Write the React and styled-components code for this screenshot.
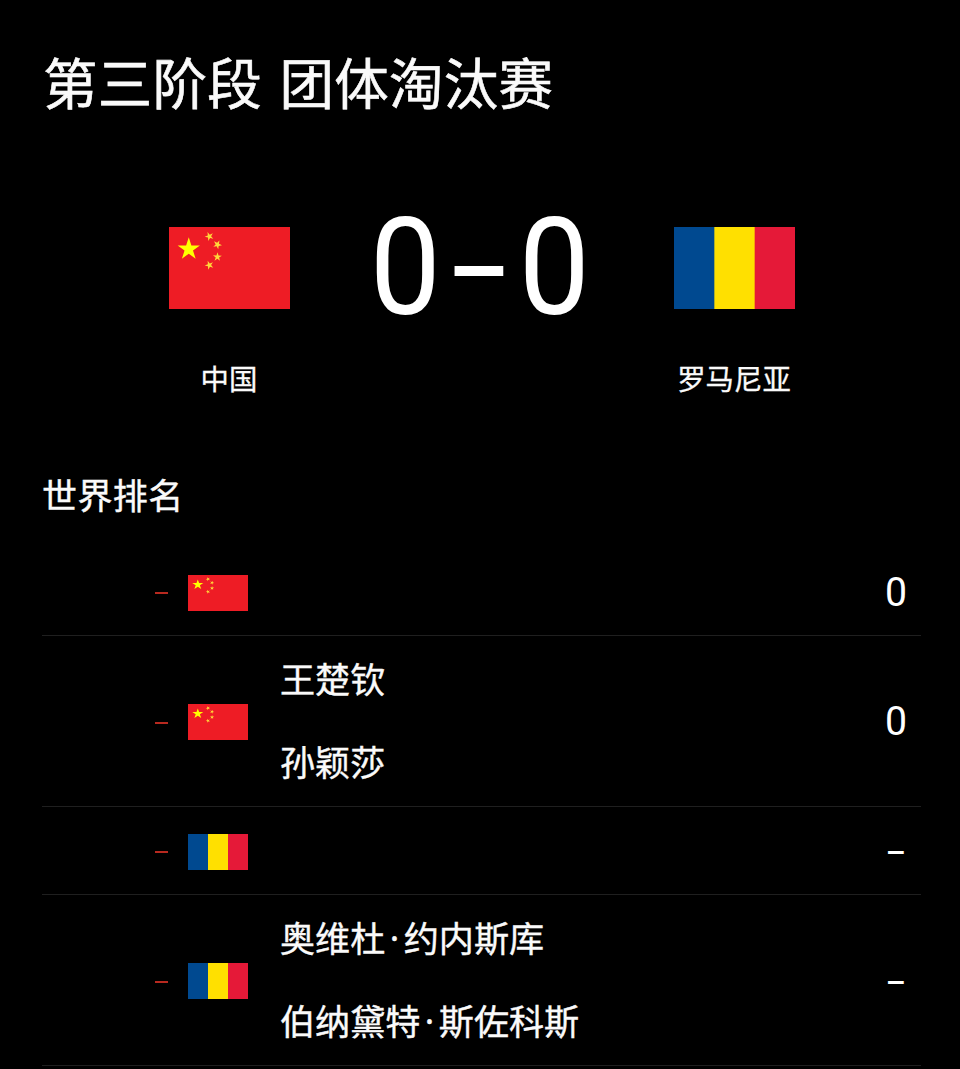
import React from 'react';
import styled, { createGlobalStyle } from 'styled-components';

const GlobalStyle = createGlobalStyle`
  body {
    margin: 0;
    background: #000;
    color: #fafafa;
    font-family: "Noto Sans CJK SC", sans-serif;
  }
`;

const Page = styled.main`
  box-sizing: border-box;
  width: 960px;
  height: 1069px;
  padding: 41px 39px 0 42px;
  overflow: hidden;
  background: #000;
`;

const Title = styled.h1`
  margin: 0;
  padding-left: 1px;
  height: 81px;
  line-height: 80px;
  font-size: 54.5px;
  font-weight: 400;
  letter-spacing: 0.25px;
  word-spacing: 5px;
  white-space: nowrap;
  -webkit-text-stroke: 0.6px currentColor;
`;

const Scoreboard = styled.section`
  display: flex;
  justify-content: space-between;
  height: 273px;
  padding: 0 126px;
`;

const Team = styled.div`
  display: flex;
  flex-direction: column;
  align-items: center;
  width: 122px;
  padding-top: 105px;
`;

const TeamName = styled.span`
  margin-top: 49px;
  font-size: 28.4px;
  line-height: 40px;
  white-space: nowrap;
  -webkit-text-stroke: 0.3px currentColor;
`;

const Score = styled.div`
  display: flex;
  justify-content: center;
  padding: 66px 4px 0 0;
  font-family: Roboto, sans-serif;
  font-size: 136px;
  line-height: 160px;
  color: #fff;
`;

const Digit = styled.span`
  display: flex;
  justify-content: center;
  width: 74.5px;
  transform: scaleX(0.93);
`;

const Divider = styled(Digit)`
  padding-top: 5px;
  transform: scaleX(0.73);
`;

const SectionTitle = styled.h2`
  margin: 0;
  padding-top: 73px;
  height: 80px;
  line-height: 52px;
  font-size: 35px;
  font-weight: 400;
  letter-spacing: 0.4px;
  -webkit-text-stroke: 0.4px currentColor;
`;

const Row = styled.div`
  box-sizing: border-box;
  display: grid;
  grid-template-columns: 126px 60px 1fr 50px;
  align-items: center;
  height: ${({ $tall }) => ($tall ? 171 : 88)}px;
  border-bottom: 1px solid #1f1f1f;
`;

const Rank = styled.span`
  width: 13px;
  height: 2px;
  margin-left: 113px;
  background: #b8291f;
`;

const RankCell = styled.div`
  display: flex;
  padding-top: 3px;
`;

const FlagCell = styled.div`
  display: flex;
  padding: 2px 0 0 20px;
`;

const FlagSvg = styled.svg`
  flex-shrink: 0;
`;

const Names = styled.div`
  display: flex;
  flex-direction: column;
  gap: 31px;
  padding: 0 0 4px 52px;
`;

const Name = styled.span`
  display: flex;
  height: 52px;
  font-size: 35.1px;
  line-height: 52px;
  -webkit-text-stroke: 0.4px currentColor;
`;

const Dot = styled.span`
  width: 18.5px;
  font-family: "Noto Sans", sans-serif;
  text-align: center;
`;

const Points = styled.span`
  padding-top: ${({ $dash }) => ($dash ? 7 : 2)}px;
  font-family: Roboto, sans-serif;
  font-size: 40px;
  line-height: 48px;
  text-align: center;
  color: #fff;
  transform: scaleX(${({ $dash }) => ($dash ? 0.8 : 0.98)});
`;

const smallStars = [
  [10, 2, 121],
  [12, 4, 98],
  [12, 7, 74],
  [10, 9, 51],
];

const starPoints = Array.from({ length: 10 }, (_, i) => {
  const r = i % 2 ? 0.382 : 1;
  const a = (i * Math.PI) / 5;
  return `${(r * Math.sin(a)).toFixed(3)},${(-r * Math.cos(a)).toFixed(3)}`;
}).join(' ');

function Flag({ country, width, height }) {
  return (
    <FlagSvg width={width} height={height} viewBox="0 0 30 20" preserveAspectRatio="none">
      {country === 'cn' ? (
        <>
          <rect width="30" height="20" fill="#ee1c25" />
          <g fill="#ffff00">
            <polygon points={starPoints} transform="translate(4.9 5.4) scale(2.9)" />
            {smallStars.map(([x, y, angle]) => (
              <polygon
                key={y}
                points={starPoints}
                fill="#ffd83a"
                transform={`translate(${x} ${y + 0.3}) rotate(${angle}) scale(1.15)`}
              />
            ))}
          </g>
        </>
      ) : (
        <>
          <rect width="30" height="20" fill="#e51938" />
          <rect width="20" height="20" fill="#ffe000" />
          <rect width="10" height="20" fill="#004990" />
        </>
      )}
    </FlagSvg>
  );
}

function PlayerName({ name }) {
  const [first, last] = name.split('·');
  return (
    <Name>
      {first}
      {last && <Dot>·</Dot>}
      {last}
    </Name>
  );
}

const rows = [
  { country: 'cn', names: [], points: '0' },
  { country: 'cn', names: ['王楚钦', '孙颖莎'], points: '0' },
  { country: 'ro', names: [], points: '–' },
  { country: 'ro', names: ['奥维杜·约内斯库', '伯纳黛特·斯佐科斯'], points: '–' },
];

function App() {
  return (
    <>
      <GlobalStyle />
      <Page>
        <Title>第三阶段 团体淘汰赛</Title>
        <Scoreboard>
          <Team>
            <Flag country="cn" width={121} height={82} />
            <TeamName>中国</TeamName>
          </Team>
          <Score>
            <Digit>0</Digit>
            <Divider>–</Divider>
            <Digit>0</Digit>
          </Score>
          <Team>
            <Flag country="ro" width={121} height={82} />
            <TeamName>罗马尼亚</TeamName>
          </Team>
        </Scoreboard>
        <SectionTitle>世界排名</SectionTitle>
        {rows.map((row, index) => (
          <Row key={index} $tall={row.names.length > 0}>
            <RankCell>
              <Rank />
            </RankCell>
            <FlagCell>
              <Flag country={row.country} width={60} height={36} />
            </FlagCell>
            <Names>
              {row.names.map((name) => (
                <PlayerName key={name} name={name} />
              ))}
            </Names>
            <Points $dash={row.points === '–'}>{row.points}</Points>
          </Row>
        ))}
      </Page>
    </>
  );
}

export default App;
